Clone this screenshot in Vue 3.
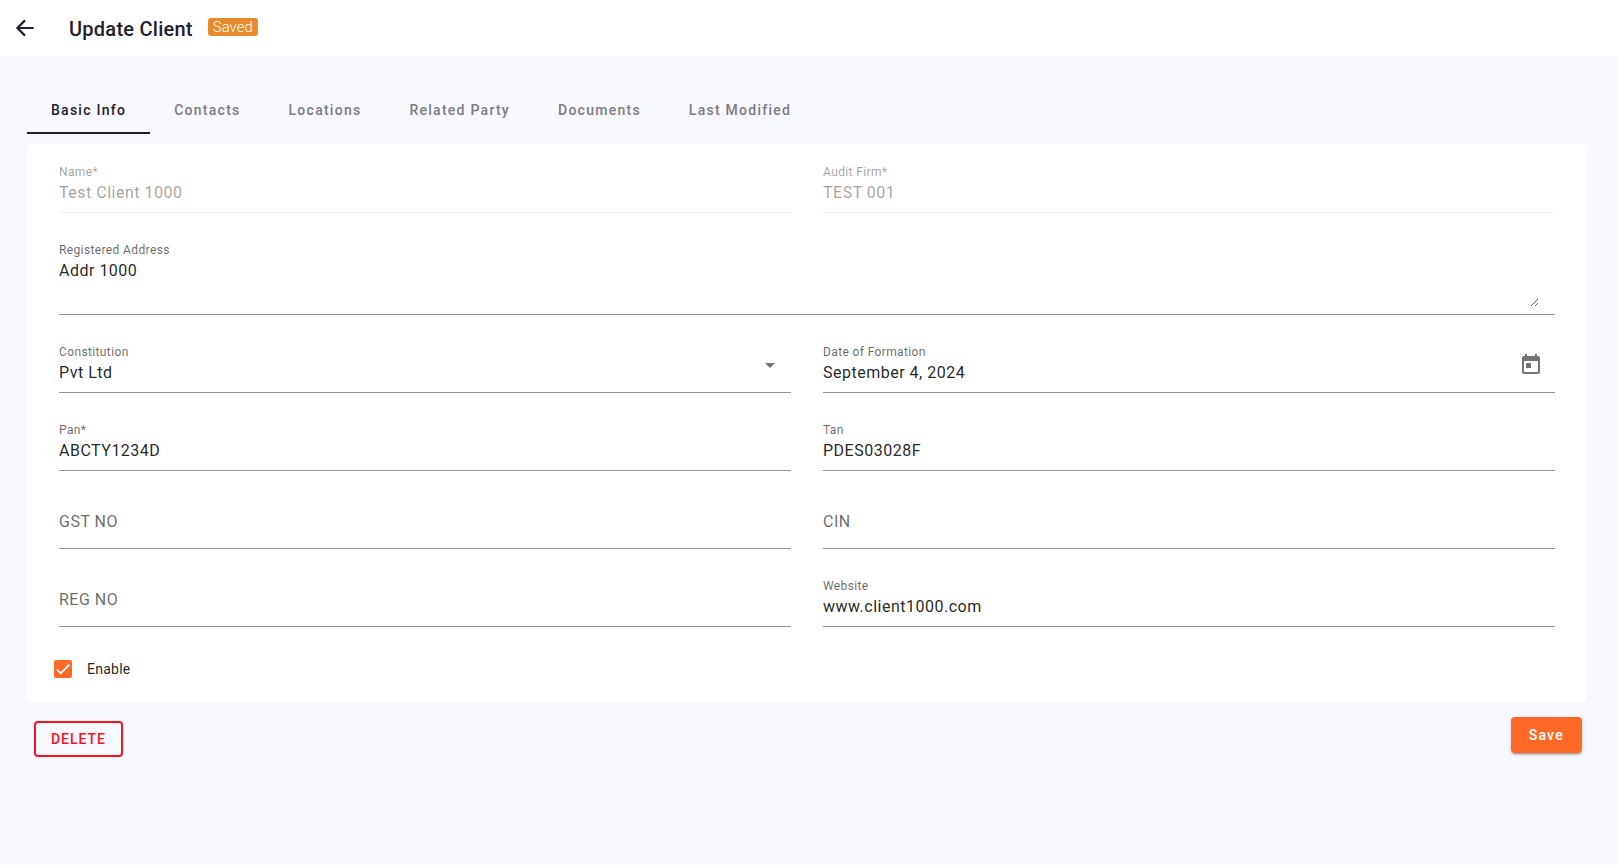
<script setup>
import { ref, reactive } from 'vue'

const tabs = ['Basic Info', 'Contacts', 'Locations', 'Related Party', 'Documents', 'Last Modified']
const activeTab = ref('Basic Info')
const enabled = ref(true)

const fields = reactive([
  { id: 'name', label: 'Name*', value: 'Test Client 1000', type: 'text', disabled: true },
  { id: 'firm', label: 'Audit Firm*', value: 'TEST 001', type: 'text', disabled: true },
  { id: 'address', label: 'Registered Address', value: 'Addr 1000', type: 'area' },
  { id: 'constitution', label: 'Constitution', value: 'Pvt Ltd', type: 'select', options: ['Pvt Ltd', 'LLP', 'Partnership'] },
  { id: 'formed', label: 'Date of Formation', value: 'September 4, 2024', type: 'date' },
  { id: 'pan', label: 'Pan*', value: 'ABCTY1234D', type: 'text' },
  { id: 'tan', label: 'Tan', value: 'PDES03028F', type: 'text' },
  { id: 'gst', label: 'GST NO', value: '', type: 'text' },
  { id: 'cin', label: 'CIN', value: '', type: 'text' },
  { id: 'reg', label: 'REG NO', value: '', type: 'text' },
  { id: 'website', label: 'Website', value: 'www.client1000.com', type: 'text' },
])
</script>

<template>
  <div class="page">
    <header class="topbar">
      <button class="back" type="button" aria-label="Back">
        <svg viewBox="0 0 24 24" width="24" height="24" aria-hidden="true">
          <path d="M21.6 12H5.6M13 4.4L5.4 12l7.6 7.6" fill="none" stroke="currentColor" stroke-width="2.2" />
        </svg>
      </button>
      <h1>Update Client</h1>
      <span class="badge">Saved</span>
    </header>

    <main>
      <nav class="tabs" role="tablist">
        <button
          v-for="tab in tabs"
          :key="tab"
          type="button"
          role="tab"
          class="tab"
          :class="{ active: tab === activeTab }"
          :aria-selected="tab === activeTab"
          @click="activeTab = tab"
        >{{ tab }}</button>
      </nav>

      <form @submit.prevent>
        <section class="card">
          <div class="fields">
            <div
              v-for="f in fields"
              :key="f.id"
              class="field"
              :class="{ disabled: f.disabled, wide: f.type === 'area', empty: !f.value }"
            >
              <label :for="f.id">{{ f.label }}</label>
              <textarea v-if="f.type === 'area'" :id="f.id" v-model="f.value" rows="2"></textarea>
              <select v-else-if="f.type === 'select'" :id="f.id" v-model="f.value">
                <option v-for="o in f.options" :key="o">{{ o }}</option>
              </select>
              <input v-else :id="f.id" v-model="f.value" type="text" :disabled="f.disabled" />
              <svg v-if="f.type === 'select'" class="arrow" viewBox="0 0 10 5" aria-hidden="true">
                <path d="M0 0h10L5 5z" fill="currentColor" />
              </svg>
              <button v-if="f.type === 'date'" class="calendar" type="button" aria-label="Open calendar">
                <svg viewBox="0 0 24 24" width="24" height="24" aria-hidden="true">
                  <path fill="currentColor" d="M19 3h-1V1h-2v2H8V1H6v2H5c-1.11 0-1.99.9-1.99 2L3 19c0 1.1.89 2 2 2h14c1.1 0 2-.9 2-2V5c0-1.1-.9-2-2-2zm0 16H5V8h14v11zM7 10h5v5H7z" />
                </svg>
              </button>
            </div>
          </div>

          <label class="check">
            <input v-model="enabled" type="checkbox" />
            <svg viewBox="0 0 24 24" aria-hidden="true">
              <path d="M1.73 12.91L8.1 19.28 22.79 4.59" fill="none" stroke="#fff" stroke-width="3" />
            </svg>
            <span>Enable</span>
          </label>
        </section>

        <div class="actions">
          <button class="delete" type="button">DELETE</button>
          <button class="save" type="submit">Save</button>
        </div>
      </form>
    </main>
  </div>
</template>

<style>
html {
  background: #f8f9ff;
}
</style>

<style scoped>
.page,
.page * {
  box-sizing: border-box;
}

.page {
  min-height: 100vh;
  background: #f8f9ff;
  color: rgba(0, 0, 0, 0.87);
  font-family: Roboto, sans-serif;
  font-size: 14px;
  -webkit-font-smoothing: antialiased;
}

button,
input,
select,
textarea {
  margin: 0;
  padding: 0;
  border: 0;
  outline: 0;
  background: none;
  color: inherit;
  font: inherit;
  letter-spacing: inherit;
}

button {
  cursor: pointer;
}

.topbar {
  display: flex;
  align-items: center;
  height: 56px;
  padding: 0 12px;
  background: #fff;
  color: #1f202c;
}

.back {
  width: 24px;
  height: 24px;
}

.back svg,
.calendar svg {
  display: block;
}

h1 {
  margin: 2px 15px 0 33px;
  font-size: 20px;
  font-weight: 500;
  line-height: 32px;
  letter-spacing: 0.0125em;
}

.badge {
  margin-bottom: 2px;
  padding: 0 5px;
  border-radius: 3px;
  background: #e88b2d;
  color: #fff;
  font-size: 15px;
  font-weight: 300;
  line-height: 18px;
}

main {
  padding: 30px 30px 30px 27px;
}

.tabs {
  display: flex;
  height: 48px;
  margin-bottom: 10px;
}

.tab {
  padding: 0 24px;
  border-bottom: 2px solid transparent;
  border-top: 2px solid transparent;
  color: #7c7c80;
  font-weight: 500;
  letter-spacing: 0.09em;
}

.tab.active {
  border-bottom-color: #1f202c;
  color: #1f202c;
}

.card {
  padding: 13px 16px;
  border-radius: 4px;
  background: #fff;
}

.fields {
  display: grid;
  grid-template-columns: 1fr 1fr;
  gap: 22px 32px;
  padding: 0 16px 22px;
}

.field {
  position: relative;
  display: flex;
  flex-direction: column;
  min-height: 56px;
  padding: 8px 0 7px;
  border-bottom: 1px solid #949494;
  font-size: 16px;
  letter-spacing: 0.03125em;
}

.field label {
  height: 16px;
  color: rgba(0, 0, 0, 0.6);
  font-size: 12px;
  line-height: 14px;
  letter-spacing: 0.03125em;
}

.field input,
.field select {
  width: 100%;
  height: 22px;
  appearance: none;
}

.field textarea {
  display: block;
  width: calc(100% - 16px);
  height: 48px;
  line-height: 24px;
  resize: vertical;
}

.wide {
  grid-column: 1 / -1;
}

.disabled {
  border-bottom-color: #f0f0f0;
  color: rgba(0, 0, 0, 0.38);
}

.disabled label {
  color: inherit;
}

.empty {
  justify-content: flex-end;
}

.empty label {
  position: absolute;
  top: 17px;
  left: 0;
  height: 24px;
  font-size: 16px;
  line-height: 24px;
}

.arrow {
  position: absolute;
  top: 26px;
  right: 16px;
  width: 10px;
  height: 5px;
  color: #757575;
  pointer-events: none;
}

.calendar {
  position: absolute;
  top: 4px;
  right: 0;
  padding: 12px;
  color: #757575;
}

.check {
  position: relative;
  display: flex;
  align-items: center;
  width: fit-content;
  height: 40px;
  padding-left: 11px;
  letter-spacing: 0.018em;
}

.check input {
  width: 18px;
  height: 18px;
  margin-right: 15px;
  border: 2px solid #757575;
  border-radius: 2px;
  appearance: none;
}

.check input:checked {
  border-color: #ff6927;
  background: #ff6927;
}

.check svg {
  position: absolute;
  left: 13px;
  width: 14px;
  height: 14px;
  pointer-events: none;
}

.actions {
  display: flex;
  align-items: flex-start;
  justify-content: space-between;
  padding: 15px 5px 0 7px;
}

.actions button {
  height: 36px;
  border-radius: 4px;
  font-weight: 500;
}

.actions .delete {
  margin-top: 4px;
  padding: 0 15px;
  border: 2px solid #ff0f1f;
  color: #ff0f1f;
  letter-spacing: 0.07em;
}

.save {
  padding: 0 18px;
  background: #ff6927;
  box-shadow: 0 3px 1px -2px rgba(0, 0, 0, 0.2), 0 2px 2px rgba(0, 0, 0, 0.14), 0 1px 5px rgba(0, 0, 0, 0.12);
  color: #fff;
  letter-spacing: 0.09em;
}
</style>
